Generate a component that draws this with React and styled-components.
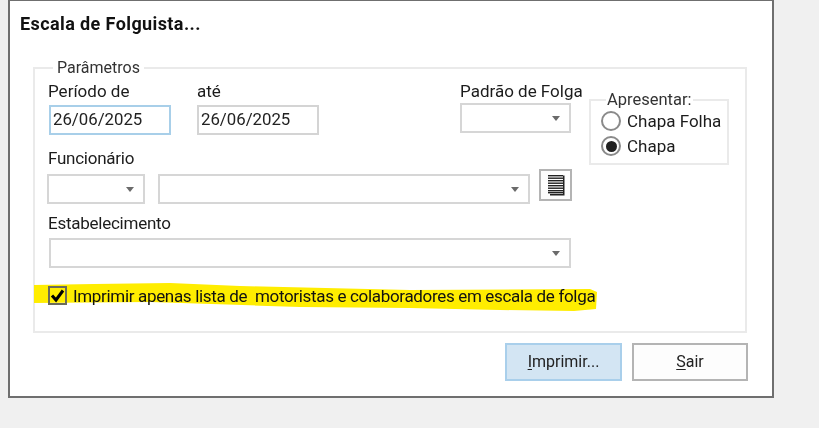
import React from "react";
import styled, { createGlobalStyle } from "styled-components";

const Global = createGlobalStyle`
  html, body { margin: 0; padding: 0; background: #f0f0f0; }
  body { width: 819px; height: 428px; overflow: hidden; font-family: Roboto, "Liberation Sans", Arial, sans-serif; color: #1a1a1a; }
`;
const Page = styled.div`
  width: 819px;
  height: 428px;
  padding-left: 8px;
  box-sizing: border-box;
  filter: blur(0.35px);
`;
const Dialog = styled.div`
  width: 766px;
  height: 398px;
  box-sizing: border-box;
  background: #fff;
  border: 2px solid #6f6f6f;
  border-top-width: 1px;
`;
const Title = styled.div`
  height: 66px;
  box-sizing: border-box;
  padding: 12px 0 0 10px;
  font-size: 18px;
  line-height: 21px;
  letter-spacing: 0.4px;
  font-weight: 700;
  color: #111;
`;
const Panel = styled.div`
  position: relative;
  margin-left: 23px;
  width: 714px;
  height: 266px;
  box-sizing: border-box;
  border: 2px solid #eaeaea;
  padding: 13px 0 0 12px;
  display: grid;
  grid-template-columns: 542px 140px;
  align-items: start;
`;
const Legend = styled.span`
  position: absolute;
  left: ${p => p.$left}px;
  top: ${p => p.$top}px;
  padding: 0 ${p => p.$pad}px;
  background: #fff;
  font-size: ${p => p.$size}px;
  line-height: 18px;
  white-space: nowrap;
  color: #333;
`;
const Column = styled.div`
  display: flex;
  flex-direction: column;
`;
const Row = styled.div`
  display: flex;
  align-items: flex-start;
  gap: ${p => p.$gap || 0}px;
`;
const Field = styled.div`
  width: ${p => p.$w}px;
  margin-top: ${p => p.$top || 0}px;
  display: flex;
  flex-direction: column;
  gap: ${p => p.$gap}px;
`;
const Label = styled.label`
  height: 18px;
  margin-left: ${p => p.$indent || 0}px;
  font-size: 17px;
  line-height: 18px;
  letter-spacing: ${p => p.$tight ? "-0.25px" : "0"};
  white-space: nowrap;
  color: #1c1c1c;
`;
const DateInput = styled.div`
  width: ${p => p.$w}px;
  height: 30px;
  margin-left: ${p => p.$indent || 0}px;
  box-sizing: border-box;
  border: 2px solid ${p => (p.$focus ? "#a8cfe9" : "#d4d4d4")};
  padding-left: 2px;
  font-size: 16.8px;
  line-height: 25px;
  color: #222;
`;
const Combo = styled.div`
  position: relative;
  width: ${p => p.$w}px;
  height: 30px;
  margin-left: ${p => p.$indent || 0}px;
  box-sizing: border-box;
  border: 2px solid #d6d6d6;
  background: #fff;
  &::after {
    content: "";
    position: absolute;
    right: 9px;
    top: 11px;
    border-left: 4.5px solid transparent;
    border-right: 4.5px solid transparent;
    border-top: 5px solid #6b6b6b;
  }
`;
const IconButton = styled.div`
  width: 33px;
  height: 32px;
  margin-top: -5px;
  box-sizing: border-box;
  border: 2px solid #b4b4b4;
  background: #fdfdfd;
  display: flex;
  align-items: center;
  justify-content: center;
`;
const CheckRow = styled.div`
  position: relative;
  margin-top: 18px;
  height: 19px;
  display: flex;
  align-items: center;
  gap: 6px;
  font-size: 17px;
  letter-spacing: -0.33px;
  white-space: nowrap;
  color: #111;
`;
const Highlight = styled.svg`
  position: absolute;
  left: -13px;
  top: -3px;
  overflow: visible;
`;
const CheckBox = styled.span`
  position: relative;
  width: 19px;
  height: 19px;
  margin-left: 1px;
  box-sizing: border-box;
  border: 2px solid #6b6b5a;
  display: flex;
  align-items: center;
  justify-content: center;
`;
const CheckText = styled.span`
  position: relative;
`;
const GroupBox = styled.div`
  position: relative;
  margin-top: 17px;
  height: 66px;
  box-sizing: border-box;
  border: 2px solid #eaeaea;
  padding: 10px 0 0 10px;
  display: flex;
  flex-direction: column;
  gap: 5px;
`;
const RadioRow = styled.div`
  display: flex;
  align-items: center;
  gap: 6px;
  height: 20px;
  font-size: 17px;
  white-space: nowrap;
  color: #1c1c1c;
`;
const Radio = styled.span`
  width: 20px;
  height: 20px;
  box-sizing: border-box;
  border: 2px solid #8a8a8a;
  border-radius: 50%;
  display: flex;
  align-items: center;
  justify-content: center;
  &::after {
    content: "";
    width: 11px;
    height: 11px;
    border-radius: 50%;
    background: ${p => (p.$on ? "#222" : "transparent")};
  }
`;
const Actions = styled.div`
  margin-top: 10px;
  padding-right: 24px;
  display: flex;
  justify-content: flex-end;
  gap: 10px;
`;
const Button = styled.div`
  width: ${p => p.$w}px;
  height: 38px;
  box-sizing: border-box;
  border: 2px solid ${p => (p.$primary ? "#a9cfeb" : "#b4b4b4")};
  background: ${p => (p.$primary ? "#d3e5f3" : "#fdfdfd")};
  font-size: 16px;
  line-height: 34px;
  text-align: center;
  color: #222;
  u { text-underline-offset: 2px; }
`;

function ListIcon() {
  return (
    <svg width="20" height="24" viewBox="0 0 20 24">
      <rect x="3" y="1" width="14" height="20" fill="#fff" />
      <path d="M17 2.5h1.5V22.5H4V21H17Z" fill="#222" />
      {[2, 4.5, 7, 9.5, 12, 14.5, 17, 19].map(y => (
        <rect key={y} x="2" y={y} width="15" height="1.4" fill="#222" />
      ))}
    </svg>
  );
}

export default function App() {
  return (
    <>
      <Global />
      <Page>
        <Dialog>
          <Title>Escala de Folguista...</Title>
          <Panel>
            <Legend $left={18} $top={-10} $pad={4} $size={16}>Parâmetros</Legend>
            <Column>
              <Row>
                <Field $w={150} $gap={5}>
                  <Label $indent={1}>Período de</Label>
                  <DateInput $w={122} $indent={2} $focus>26/06/2025</DateInput>
                </Field>
                <Field $w={263} $gap={5}>
                  <Label>até</Label>
                  <DateInput $w={122}>26/06/2025</DateInput>
                </Field>
                <Field $w={111} $gap={3}>
                  <Label>Padrão de Folga</Label>
                  <Combo $w={111} />
                </Field>
              </Row>
              <Field $w={530} $top={14} $gap={7}>
                <Label $indent={1} $tight>Funcionário</Label>
                <Row $gap={13}>
                  <Combo $w={98} />
                  <Row $gap={9}>
                    <Combo $w={372} />
                    <IconButton><ListIcon /></IconButton>
                  </Row>
                </Row>
              </Field>
              <Field $w={530} $top={10} $gap={6}>
                <Label $indent={1} $tight>Estabelecimento</Label>
                <Combo $w={522} $indent={2} />
              </Field>
              <CheckRow>
                <Highlight width="563" height="28" viewBox="0 0 563 28">
                  <path d="M0 2 L60 1 L136 0 L206 3 L376 7 L556 6 L563 9 L562 26 L540 28 L466 27 L376 25 L266 24 L116 19 L0 20 Z" fill="#ffed00" />
                </Highlight>
                <CheckBox>
                  <svg width="15" height="15" viewBox="0 0 15 15">
                    <path d="M2 7.5 L6 12 L13 2.5" fill="none" stroke="#000" strokeWidth="3" />
                  </svg>
                </CheckBox>
                <CheckText>Imprimir apenas lista de&nbsp; motoristas e colaboradores em escala de folga</CheckText>
              </CheckRow>
            </Column>
            <GroupBox>
              <Legend $left={15} $top={-10} $pad={1} $size={16.5}>Apresentar:</Legend>
              <RadioRow><Radio />Chapa Folha</RadioRow>
              <RadioRow><Radio $on />Chapa</RadioRow>
            </GroupBox>
          </Panel>
          <Actions>
            <Button $primary $w={117}><u>I</u>mprimir...</Button>
            <Button $w={116}><u>S</u>air</Button>
          </Actions>
        </Dialog>
      </Page>
    </>
  );
}
